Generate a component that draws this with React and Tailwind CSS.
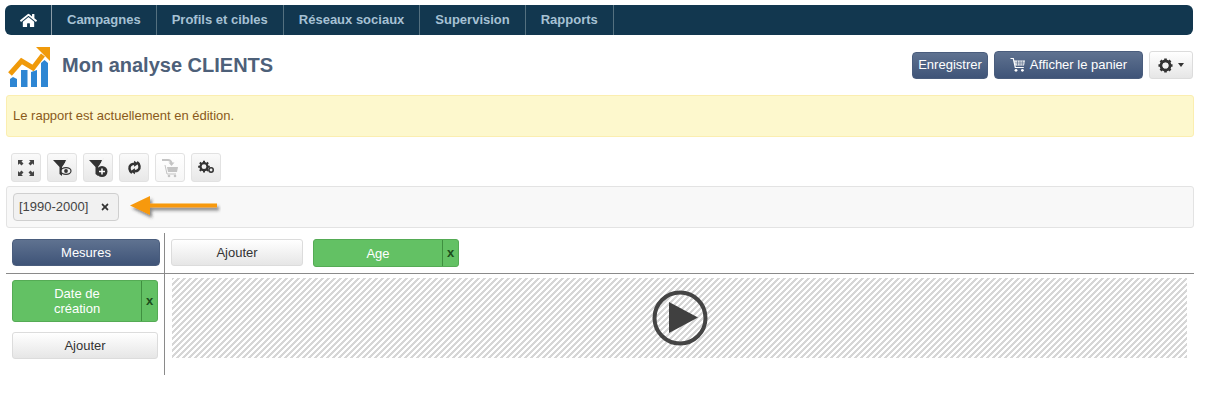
import React from 'react';
import { FaHome, FaTimes } from 'react-icons/fa';

const NAV_ITEMS = ['Campagnes', 'Profils et cibles', 'Réseaux sociaux', 'Supervision', 'Rapports'];

const btnBlue = "rounded-[4px] border border-[#4a5d7d] bg-gradient-to-b from-[#5f7290] to-[#3f5478] text-white text-[13px]";
const btnGray = "rounded-[3px] border border-[#dcdcdc] bg-gradient-to-b from-white to-[#e6e6e6] text-[#333] text-[13px]";

const CartIcon = () => (
  <svg width="16" height="16" viewBox="0 0 16 16" fill="none">
    <path d="M0.5 1.5h2.8l2 9h8.5" stroke="#fff" strokeWidth="1.2" />
    <path d="M4 3.5h11l-1 5H5.2z" fill="#fff" />
    <path d="M5 5.2h9.5M5.3 6.9h8.8M7.5 3.5v5M10 3.5v5M12.3 3.500v5" stroke="#4d6181" strokeWidth=".6" />
    <circle cx="6" cy="13.3" r="1.4" fill="#fff" />
    <circle cx="12.4" cy="13.3" r="1.4" fill="#fff" />
  </svg>
);

const Gear = () => (
  <svg width="15" height="15" viewBox="0 0 16 16" fill="none">
    <circle cx="8" cy="8" r="4.8" stroke="#333" strokeWidth="3" />
    <path d="M8 .5v15M.5 8h15M2.7 2.7l10.6 10.600M13.3 2.7L2.7 13.300" stroke="#333" strokeWidth="2.8" strokeDasharray="3 9 3 0" />
    <circle cx="8" cy="8" r="3" fill="#f2f2f2" />
  </svg>
);

const FunnelIcon = ({ badge }) => (
  <svg width="20" height="20" viewBox="0 0 20 20">
    <path d="M1 2h14l-5 7v9l-2.500-2V9z" fill="#333" />
    <path d="M15.500 0L9.500 15" stroke="#f1f1f1" strokeWidth="1.2" />
    {badge === 'eye' && (
      <g>
        <ellipse cx="14" cy="13" rx="5" ry="3.4" fill="#f1f1f1" stroke="#333" strokeWidth="1.2" />
        <circle cx="14" cy="13" r="1.9" fill="#333" />
      </g>
    )}
    {badge === 'plus' && (
      <g>
        <circle cx="14" cy="13.500" r="5.500" fill="#333" />
        <path d="M14 10.500v6M11 13.500h6" stroke="#fff" strokeWidth="1.5" />
      </g>
    )}
  </svg>
);

const ExpandIcon = () => (
  <svg width="16" height="16" viewBox="0 0 16 16" fill="#444">
    <path d="M0 0h5L3.500 1.500 5.500 3.500 3.500 5.500 1.500 3.500 0 5z" />
    <path d="M16 0h-5l1.500 1.500-2 2 2 2 2-2L16 5z" />
    <path d="M0 16h5l-1.500-1.500 2-2-2-2-2 2L0 11z" />
    <path d="M16 16h-5l1.500-1.500 -2-2 2-2 2 2L16 11z" />
  </svg>
);

const SyncIcon = () => (
  <svg width="15" height="15" viewBox="0 0 18 18" fill="#333">
    <path d="M6 15.500C2.500 13.500 2 8 4.500 6 5.500 5 7 4.500 9 4.500" fill="none" stroke="#333" strokeWidth="3" />
    <path d="M8.500 .8L14 4.500 8.500 8.200z" />
    <path d="M12 2.500C15.500 4.500 16 10 13.500 12 12.500 13 11 13.500 9 13.500" fill="none" stroke="#333" strokeWidth="3" />
    <path d="M9.500 9.800L4 13.500l5.500 3.700z" />
  </svg>
);

const CogsIcon = () => (
  <svg width="17" height="15" viewBox="0 0 20 18" fill="none">
    <circle cx="7" cy="8" r="4.200" stroke="#333" strokeWidth="2.600" />
    <path d="M7 1v14M0 8h14M2 3l10 10M12 3L2 13" stroke="#333" strokeWidth="2.400" strokeDasharray="2.500 9 2.500 0" />
    <circle cx="15.500" cy="12" r="2.600" stroke="#333" strokeWidth="1.800" />
  </svg>
);

const DisabledCart = () => (
  <svg width="20" height="20" viewBox="0 0 20 20" fill="none">
    <path d="M2 2h6c2 0 3 1 3.500 3" stroke="#c4c4c4" strokeWidth="2.200" />
    <path d="M8.500 4.500l3 3.500 3-3.500z" fill="#c4c4c4" />
    <path d="M7 9h11l-1 5H8z" fill="#c4c4c4" />
    <path d="M5 7l2 9h9" stroke="#c4c4c4" strokeWidth="1" />
    <circle cx="9" cy="18" r="1.300" fill="#c4c4c4" />
    <circle cx="15" cy="18" r="1.300" fill="#c4c4c4" />
  </svg>
);

const LogoIcon = () => (
  <svg className="mt-[4px] shrink-0" width="50" height="50" viewBox="0 0 50 50">
    <path d="M5 37l3-2 4 2v8H5zM16 28h6.500v17H16zM26 30l6-2v17h-6zM36 21l3.500-3 3.500 3v24h-7z" fill="#2e86d3" />
    <path d="M5 32L16.500 19 28 26 38 13" fill="none" stroke="#f09a0a" strokeWidth="5" />
    <path d="M31 5h14v14z" fill="#f09a0a" />
  </svg>
);

const ToolButton = ({ children, disabled }) => (
  <div className={`w-[30px] h-[29px] flex items-center justify-center rounded-[3px] border border-[#e2e2e2] bg-gradient-to-b ${disabled ? 'from-white to-[#f6f6f6]' : 'from-[#fafafa] to-[#e8e8e8]'}`}>
    {children}
  </div>
);

const GreenChip = ({ className, children }) => (
  <div className={`flex rounded-[3px] border border-[#55ab55] bg-[#63c164] text-white text-[13px] ${className}`}>
    <div className="flex-1 flex items-center justify-center text-center leading-[15px]">{children}</div>
    <div className="w-[16px] border-l border-[#3f8f40] flex items-center justify-center text-[#1c4d1c] text-[13px] font-bold">x</div>
  </div>
);

export default function App() {
  return (
    <div className="w-[1213px] h-[413px] bg-white overflow-hidden font-['Liberation_Sans',sans-serif]">
      {/* nav */}
      <div className="mt-[5px] ml-[5px] w-[1188px] h-[30px] rounded-[6px] bg-[#12374f] flex">
        <div className="w-[47px] border-r border-[#8b9ca8] flex items-center justify-center">
          <FaHome size={17} color="#fff" />
        </div>
        {NAV_ITEMS.map(item => (
          <div key={item} className="px-[15px] border-r border-[#54707f] flex items-center text-[#a6c1d4] text-[13px] font-bold">
            {item}
          </div>
        ))}
      </div>

      {/* title row */}
      <div className="h-[60px] flex items-center pl-[5px]">
        <LogoIcon />
        <h1 className="ml-[7px] text-[20px] font-bold text-[#4d6079]">Mon analyse CLIENTS</h1>
        <div className="ml-auto mr-[20px] flex items-center">
          <button className={`${btnBlue} w-[76px] h-[27px]`}>Enregistrer</button>
          <button className={`${btnBlue} ml-[6px] w-[149px] h-[28px] flex items-center justify-center gap-[4px]`}>
            <CartIcon />
            <span>Afficher le panier</span>
          </button>
          <button className={`${btnGray} ml-[6px] w-[44px] h-[28px] flex items-center justify-center gap-[5px]`}>
            <Gear />
            <span className="w-0 h-0 border-x-[3.5px] border-x-transparent border-t-[4px] border-t-[#333]"></span>
          </button>
        </div>
      </div>

      {/* alert */}
      <div className="ml-[6px] w-[1188px] h-[42px] rounded-[3px] border border-[#fbeeb0] bg-[#fdf8cd] pl-[6px] flex items-center text-[13px] text-[#8a5a1b]">
        Le rapport est actuellement en édition.
      </div>

      {/* toolbar */}
      <div className="mt-[16px] ml-[11px] flex gap-[6px]">
        <ToolButton><ExpandIcon /></ToolButton>
        <ToolButton><FunnelIcon badge="eye" /></ToolButton>
        <ToolButton><FunnelIcon badge="plus" /></ToolButton>
        <ToolButton><SyncIcon /></ToolButton>
        <ToolButton disabled><DisabledCart /></ToolButton>
        <ToolButton><CogsIcon /></ToolButton>
      </div>

      {/* filter */}
      <div className="mt-[4px] ml-[6px] w-[1188px] h-[42px] rounded-[3px] border border-[#e3e3e3] bg-[#f8f8f8] pl-[6px] flex items-center">
        <div className="w-[106px] h-[28px] rounded-[4px] border border-[#cfcfcf] bg-[#f1f1f1] flex items-center pl-[5px] text-[13px] text-[#444]">
          [1990-2000]
          <FaTimes size={10} color="#333" className="ml-[12px]" />
        </div>
        <svg className="ml-[10px] mt-[1px]" width="92" height="26" viewBox="0 0 92 26">
          <defs>
            <filter id="arrowShadow" x="-10%" y="-40%" width="125%" height="200%">
              <feDropShadow dx="2" dy="3" stdDeviation="1.5" floodColor="#333" floodOpacity=".55" />
            </filter>
          </defs>
          <path d="M1 10.500L21 1v7.500h67v4H21V20z" fill="#f7990c" filter="url(#arrowShadow)" />
        </svg>
      </div>

      {/* pivot */}
      <div className="mt-[5px] ml-[6px] w-[1188px]">
        <div className="h-[41px] border-b border-[#8a8a8a] flex">
          <div className="w-[159px] border-r border-[#8a8a8a] pl-[6px] pt-[6px]">
            <button className={`${btnBlue} w-[148px] h-[27px]`}>Mesures</button>
          </div>
          <div className="pl-[6px] pt-[6px] flex gap-[10px]">
            <button className={`${btnGray} w-[132px] h-[27px]`}>Ajouter</button>
            <GreenChip className="w-[146px] h-[28px]">Age</GreenChip>
          </div>
        </div>
        <div className="flex h-[101px]">
          <div className="w-[159px] border-r border-[#8a8a8a] pl-[6px] pt-[6px]">
            <GreenChip className="w-[146px] h-[42px]">Date de<br />création</GreenChip>
            <button className={`${btnGray} mt-[10px] w-[146px] h-[27px]`}>Ajouter</button>
          </div>
          <div className="ml-[7px] mt-[4px] w-[1015px] h-[80px] flex items-center justify-center bg-[repeating-linear-gradient(135deg,#d6d6d6_0,#d6d6d6_2.1px,#ffffff_2.1px,#ffffff_4.24px)]">
            <svg width="56" height="56" viewBox="0 0 56 56">
              <circle cx="28" cy="28" r="25.5" fill="none" stroke="#444" strokeWidth="4" />
              <path d="M17 12l29 15.500-29 15.500z" fill="#404040" />
            </svg>
          </div>
        </div>
      </div>
    </div>
  );
}
